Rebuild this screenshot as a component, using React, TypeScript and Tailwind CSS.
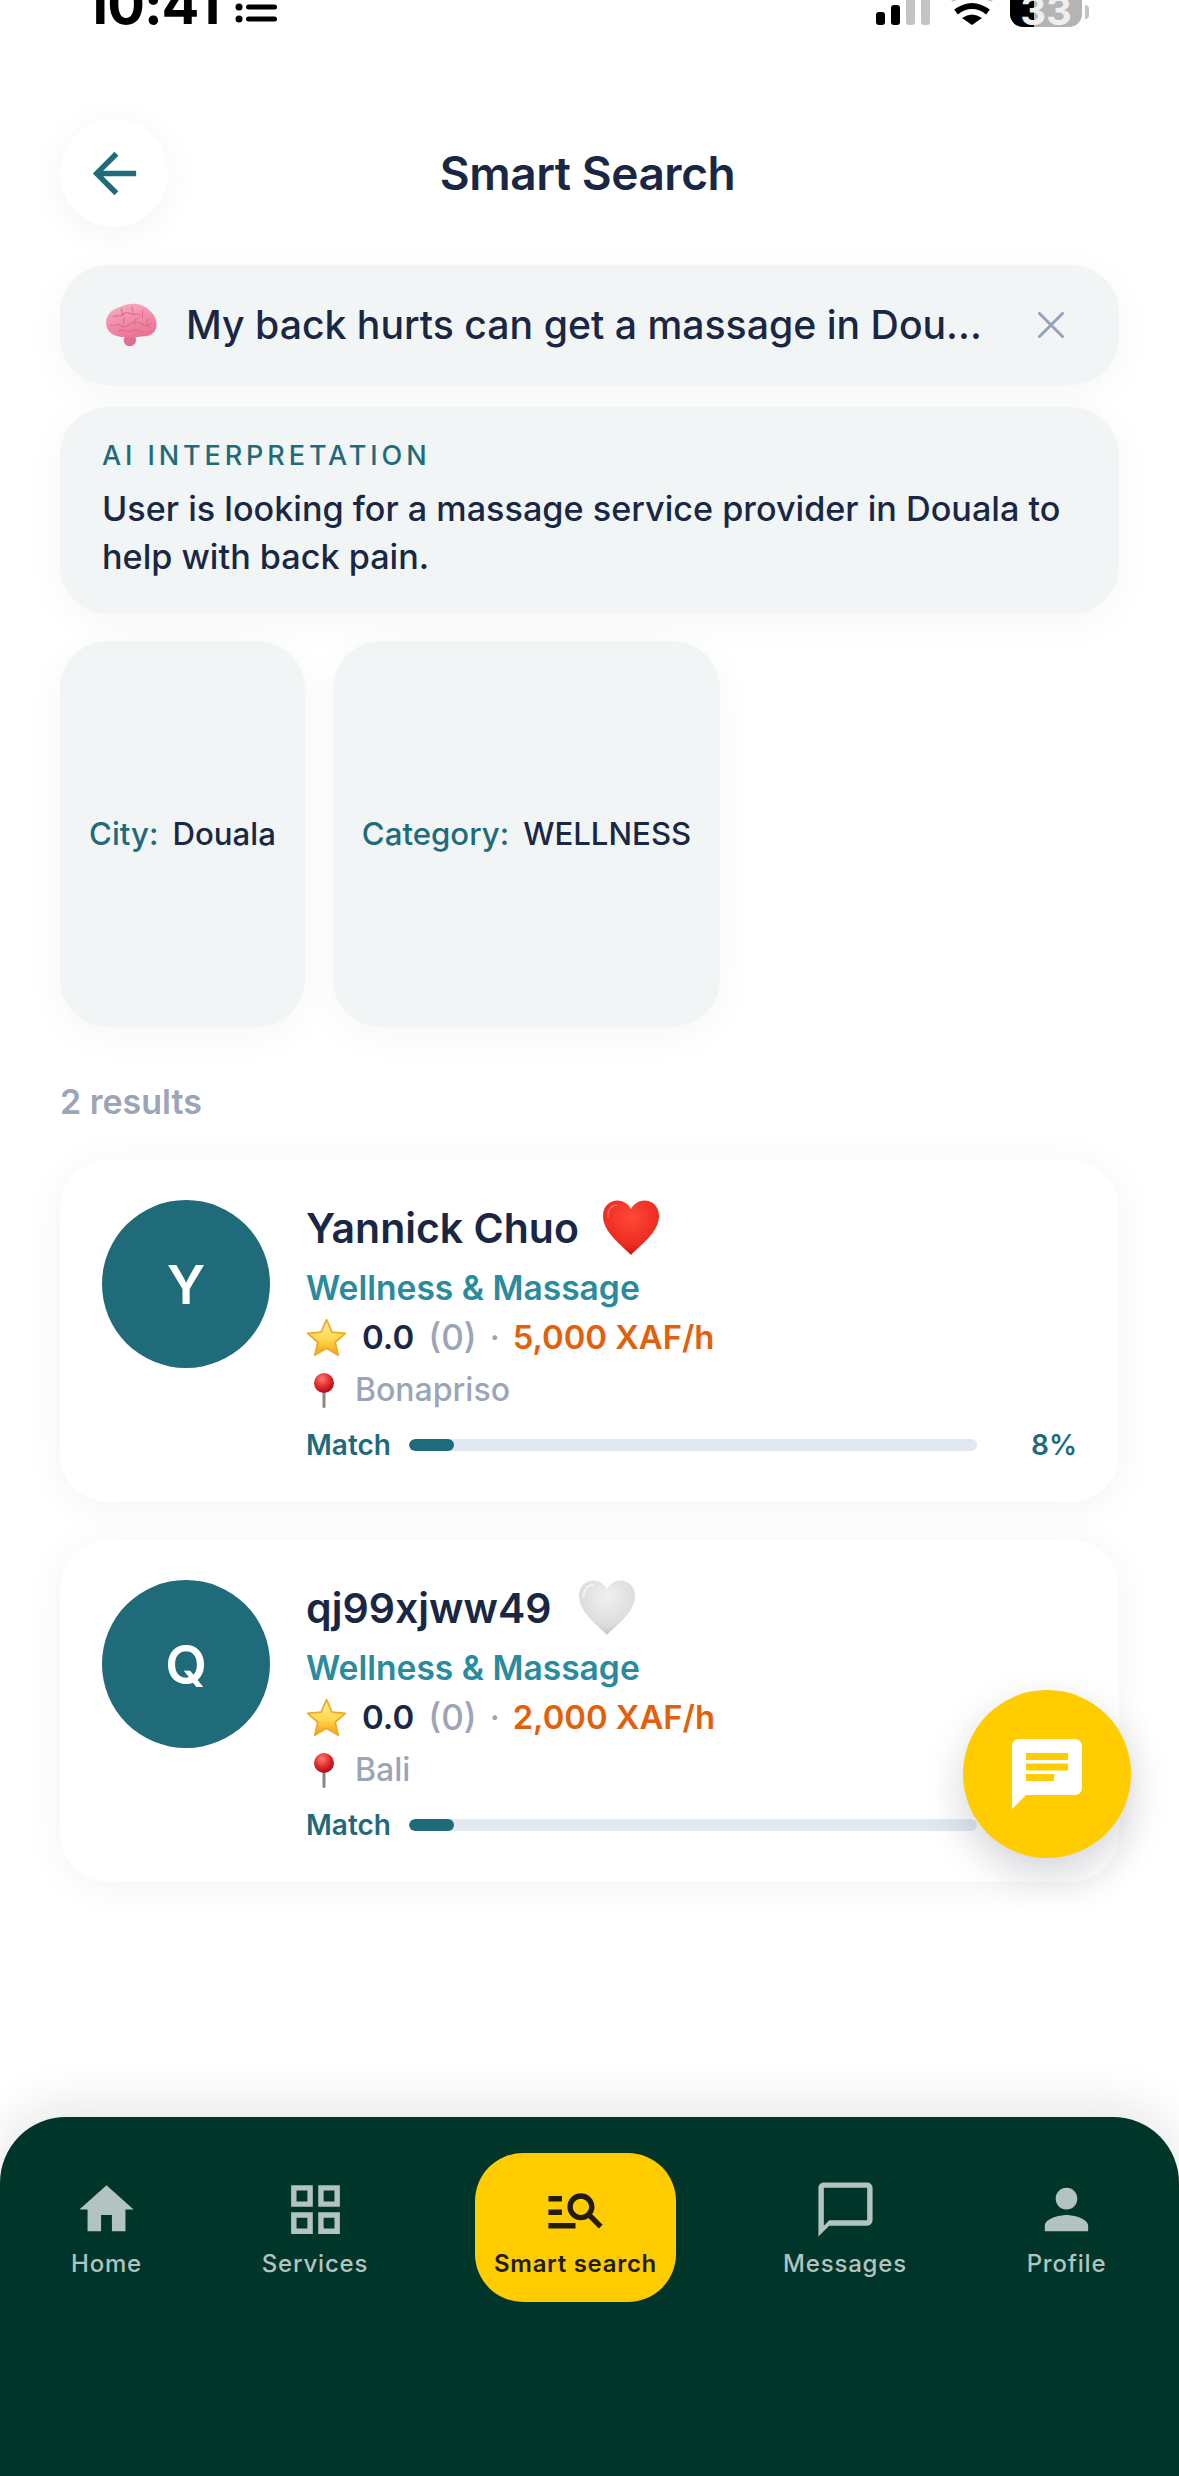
import React from "react";

const Mi = ({ d, size, className }: { d: string; size: number; className?: string }) => (
  <svg viewBox="0 0 24 24" width={size} height={size} className={className} fill="currentColor">
    <path d={d} />
  </svg>
);

const ICONS = {
  back: "M20 11H7.83l5.59-5.59L12 4l-8 8 8 8 1.41-1.41L7.83 13H20v-2z",
  home: "M10 20v-6h4v6h5v-8h3L12 3 2 12h3v8z",
  grid: "M3 3v8h8V3H3zm6 6H5V5h4v4zm-6 4v8h8v-8H3zm6 6H5v-4h4v4zm-6 4zM13 3v8h8V3h-8zm6 6h-4V5h4v4zm-6 4v8h8v-8h-8zm6 6h-4v-4h4v4z",
  search:
    "M7 9H2V7h5v2zm0 3H2v2h5v-2zm13.59 7-3.83-3.83c-.8.52-1.74.83-2.76.83-2.76 0-5-2.24-5-5s2.24-5 5-5 5 2.24 5 5c0 1.02-.31 1.96-.83 2.75L22 17.59 20.59 19zM17 11c0-1.65-1.35-3-3-3s-3 1.35-3 3 1.35 3 3 3 3-1.35 3-3zM2 19h10v-2H2v2z",
  msg: "M20 2H4c-1.1 0-2 .9-2 2v18l4-4h14c1.1 0 2-.9 2-2V4c0-1.1-.9-2-2-2zm0 14H6l-2 2V4h16v12z",
  person:
    "M12 12c2.21 0 4-1.79 4-4s-1.79-4-4-4-4 1.79-4 4 1.79 4 4 4zm0 2c-2.67 0-8 1.34-8 4v2h16v-2c0-2.66-5.33-4-8-4z",
  chat: "M20 2H4c-1.1 0-2 .9-2 2v18l4-4h14c1.1 0 2-.9 2-2V4c0-1.1-.9-2-2-2zM6 9h12v2H6V9zm8 5H6v-2h8v2zm4-6H6V6h12v2z",
};

const Brain = () => (
  <svg viewBox="0 0 53 44" width={53} height={44} className="shrink-0">
    <defs>
      <linearGradient id="br" x1="0" y1="0" x2="0.4" y2="1">
        <stop offset="0" stopColor="#f8b0c6" />
        <stop offset="1" stopColor="#ec7596" />
      </linearGradient>
    </defs>
    <path d="M30 33c2 4 1 9-4 10-5 1-8-3-7-8l5-4z" fill="#df6f8e" />
    <path
      d="M1 20C1 12 7 6 15 4 23-1 38-1 45 8c7 5 9 17 3 22-4 4-10 3-15 4-6 1-10 1-15 0C10 34 1 29 1 20z"
      fill="url(#br)"
    />
    <g fill="none" stroke="#dd6d8d" strokeWidth="1.100" strokeLinecap="round">
      <path d="M8 14c4-3 6 1 9-2s6-3 9-1 6-2 9 1" />
      <path d="M16 6c2 3 0 5 3 6M27 4c-1 3 2 4 1 7M38 7c-2 3 1 5-1 8" />
      <path d="M5 22c4 2 7-2 10 0s5 3 9 0 9-4 13-1 6 2 9-1" />
      <path d="M14 28c4-3 8 2 12 0s8-1 11 1M44 16c-3 2-3 5-1 8M33 15c-3 1-4 3-3 6M20 15c-2 1-2 3-1 5" />
    </g>
  </svg>
);

const Star = () => (
  <svg viewBox="1 1 38 36" width={41} height={39} className="shrink-0">
    <defs>
      <linearGradient id="st" x1="0" y1="0" x2="0" y2="1">
        <stop offset="0" stopColor="#fff0a6" />
        <stop offset="0.55" stopColor="#ffd84e" />
        <stop offset="1" stopColor="#f29f12" />
      </linearGradient>
    </defs>
    <path
      d="M20 2.500l5 11.500 12.500 1.200-9.500 8.200 2.900 12.100L20 29l-10.900 6.500L12 23.400 2.500 15.200 15 14z"
      fill="url(#st)"
      stroke="#eeaa22"
      strokeWidth="1.600"
      strokeLinejoin="round"
    />
  </svg>
);

const Heart = ({ active }: { active: boolean }) => {
  const id = active ? "hr" : "hg";
  return (
    <svg viewBox="0 0 58 56" width={58} height={56} className="shrink-0">
      <defs>
        <radialGradient id={id} cx="0.5" cy="0.3" r="0.75">
          <stop offset="0" stopColor={active ? "#ff4a38" : "#f0f0f0"} />
          <stop offset="0.7" stopColor={active ? "#ec2a20" : "#dcdcdc"} />
          <stop offset="1" stopColor={active ? "#bd0e0a" : "#bdbdbd"} />
        </radialGradient>
      </defs>
      <path
        d="M29 55C22 47 1 33 1 16 1 6 8 .5 15.500.5 21 .5 26 3.500 29 9 32 3.500 37 .5 42.500.5 50 .5 57 6 57 16 57 33 36 47 29 55z"
        fill={`url(#${id})`}
      />
      <path
        d="M6 17C5 10 10 5 15 5"
        fill="none"
        stroke={active ? "#ff8a78" : "#ffffff"}
        strokeWidth="1.500"
        strokeLinecap="round"
        opacity="0.7"
      />
    </svg>
  );
};

const Pin = ({ id }: { id: string }) => (
  <svg viewBox="0 0 22 36" width={22} height={36} className="shrink-0">
    <defs>
      <radialGradient id={id} cx="0.4" cy="0.3" r="0.7">
        <stop offset="0" stopColor="#ff7a6e" />
        <stop offset="0.6" stopColor="#e0262a" />
        <stop offset="1" stopColor="#a80f16" />
      </radialGradient>
    </defs>
    <rect x="9.500" y="18" width="3" height="18" rx="1.500" fill="#8c8584" />
    <circle cx="11" cy="11" r="10" fill={`url(#${id})`} />
  </svg>
);

type P = { initial: string; name: string; fav: boolean; price: string; area: string; id: string; heartGap: string };

const Card = ({ p }: { p: P }) => (
  <div className="flex gap-[36px] rounded-[48px] bg-white px-[42px] pb-[42px] pt-[40px] shadow-[0_4px_40px_rgba(15,23,42,0.05)]">
    <div className="flex h-[168px] w-[168px] shrink-0 items-center justify-center rounded-full bg-[#1f6b7a] text-[54px] font-semibold text-white">
      {p.initial}
    </div>
    <div className="flex min-w-0 flex-1 flex-col">
      <div className={`flex h-[56px] items-center ${p.heartGap}`}>
        <span className="text-[41px] font-semibold leading-[56px] text-[#1a2744]">{p.name}</span>
        <Heart active={p.fav} />
      </div>
      <div className="mt-[9px] text-[33.6px] font-semibold leading-[46px] text-[#2a8a9e]">Wellness &amp; Massage</div>
      <div className="mt-[3px] flex h-[46px] items-center text-[33px] font-semibold leading-[46px]">
        <Star />
        <span className="ml-[15px] text-[#1a2744]">0.0</span>
        <span className="ml-[14px] text-[35px] font-medium text-[#9aa5b8]">(0)</span>
        <span className="ml-[13px] font-medium text-[#9aa5b8]">·</span>
        <span className="ml-[13px] text-[32.8px] text-[#e35f0a]">{p.price}</span>
      </div>
      <div className="mt-[7px] flex h-[46px] items-center pl-[7px]">
        <Pin id={p.id} />
        <span className="ml-[20px] text-[32px] font-medium text-[#9aa5b8]">{p.area}</span>
      </div>
      <div className="mt-[17px] flex h-[30px] items-center">
        <span className="w-[103px] shrink-0 text-[28px] font-semibold text-[#1f6b7a]">Match</span>
        <div className="h-[12px] flex-1 overflow-hidden rounded-full bg-[#e2e8f0]">
          <div className="h-full w-[8%] rounded-full bg-[#1f6b7a]" />
        </div>
        <span className="w-[100px] shrink-0 text-right text-[28px] font-semibold text-[#1f6b7a]">8%</span>
      </div>
    </div>
  </div>
);

const NavItem = ({ icon, label, w, ml }: { icon: string; label: string; w: string; ml: string }) => (
  <div className={`flex flex-col items-center pt-[24px] text-[#b2c3c0] ${w} ${ml}`}>
    <Mi d={icon} size={65} />
    <span className="mt-[7px] whitespace-nowrap text-[24px] font-medium leading-[30px] tracking-[0.8px]">{label}</span>
  </div>
);

export default function App() {
  return (
    <div className="relative flex min-h-[2476px] w-full flex-col overflow-hidden bg-white font-['Inter',sans-serif]">
      {/* status bar */}
      <div className="flex h-[27px] shrink-0 items-end justify-between overflow-hidden pl-[84px] pr-[90px]">
        <div className="flex items-end">
          <span className="mb-[-5px] text-[56px] font-bold leading-none tracking-[-1px] text-black">10:41</span>
          <svg width="42" height="20" viewBox="0 0 42 20" className="mb-[4px] ml-[15px]">
            <circle cx="4" cy="4" r="3.500" fill="#000" />
            <circle cx="4" cy="16" r="3.500" fill="#000" />
            <rect x="11" y="1.500" width="31" height="5" rx="2.500" fill="#000" />
            <rect x="11" y="13.500" width="31" height="5" rx="2.500" fill="#000" />
          </svg>
        </div>
        <div className="flex items-end">
          <svg width="54" height="25" viewBox="0 0 54 25" className="mb-[2px]">
            <rect x="0" y="12" width="9" height="13" rx="3" fill="#000" />
            <rect x="15" y="5" width="9" height="20" rx="3" fill="#000" />
            <rect x="30" y="-4" width="9" height="29" rx="3" fill="#c4c4c4" />
            <rect x="45" y="-4" width="9" height="29" rx="3" fill="#c4c4c4" />
          </svg>
          <svg width="50" height="27" viewBox="0 0 50 27" className="ml-[17px]">
            <path d="M4-1Q25-9 46-1" fill="none" stroke="#c4c4c4" strokeWidth="6" />
            <path d="M9 12Q25 0 41 12" fill="none" stroke="#000" strokeWidth="6" />
            <path d="M25 25L15 18Q25 11 35 18Z" fill="#000" />
          </svg>
          <div className="relative ml-[13px] flex h-[27px] w-[72px] items-end justify-center overflow-hidden rounded-b-[13px] bg-[linear-gradient(90deg,#000_33%,#b4b4b4_33%)]">
            <span className="mb-[1px] text-[40px] font-bold leading-[30px] text-[#eeeeee]">33</span>
          </div>
          <div className="mb-[8px] ml-[3px] h-[14px] w-[4px] rounded-r-full bg-[#c4c4c4]" />
        </div>
      </div>

      <div className="flex flex-col px-[60px]">
        {/* header */}
        <div className="mt-[92px] flex items-center justify-between">
          <button className="flex h-[108px] w-[108px] items-center justify-center rounded-full bg-white text-[#1f6b7a] shadow-[0_6px_36px_rgba(15,23,42,0.05)]">
            <Mi d={ICONS.back} size={65} />
          </button>
          <h1 className="mr-[4px] text-[46px] font-semibold tracking-[-0.45px] text-[#1a2744]">Smart Search</h1>
          <div className="h-[108px] w-[108px]" />
        </div>

        {/* query */}
        <div className="mt-[38px] flex h-[120px] items-center rounded-[48px] bg-[#f1f5f6] pl-[45px] pr-[55px] shadow-[0_8px_40px_rgba(15,23,42,0.04)]">
          <Brain />
          <span className="ml-[28px] flex-1 truncate text-[39.2px] font-medium text-[#1a2744]">
            My back hurts can get a massage in Dou...
          </span>
          <svg width="26" height="26" viewBox="0 0 26 26" className="shrink-0">
            <path d="M1.500 1.500l23 23M24.500 1.500l-23 23" stroke="#94a3b8" strokeWidth="3" strokeLinecap="round" />
          </svg>
        </div>

        {/* AI */}
        <div className="mt-[22px] rounded-[48px] bg-[#f1f5f6] px-[42px] pb-[33px] pt-[32px] shadow-[0_8px_40px_rgba(15,23,42,0.04)]">
          <div className="text-[27px] font-medium leading-[34px] tracking-[3.900px] text-[#1f6b7a]">AI INTERPRETATION</div>
          <p className="mt-[12px] text-[34.2px] font-medium leading-[48px] text-[#1a2744]">
            User is looking for a massage service provider in Douala to help with back pain.
          </p>
        </div>

        {/* chips */}
        <div className="mt-[27px] flex gap-[28px]">
          <div className="flex h-[386px] w-[245px] items-center justify-center gap-[14px] rounded-[48px] bg-[#f1f5f6] text-[31.2px] font-medium shadow-[0_8px_40px_rgba(15,23,42,0.04)]">
            <span className="text-[#1f6b7a]">City:</span>
            <span className="text-[#1a2744]">Douala</span>
          </div>
          <div className="flex h-[386px] w-[387px] items-center justify-center gap-[14px] rounded-[48px] bg-[#f1f5f6] text-[31.2px] font-medium shadow-[0_8px_40px_rgba(15,23,42,0.04)]">
            <span className="text-[#1f6b7a]">Category:</span>
            <span className="text-[#1a2744]">WELLNESS</span>
          </div>
        </div>

        <div className="mt-[54px] text-[34px] font-semibold leading-[42px] text-[#9aa5b8]">2 results</div>

        <div className="mt-[37px] flex flex-col gap-[38px]">
          <Card p={{ initial: "Y", name: "Yannick Chuo", fav: true, price: "5,000 XAF/h", area: "Bonapriso", id: "p1", heartGap: "gap-[23px]" }} />
          <Card p={{ initial: "Q", name: "qj99xjww49", fav: false, price: "2,000 XAF/h", area: "Bali", id: "p2", heartGap: "gap-[27px]" }} />
        </div>
      </div>

      <div className="flex-1" />

      {/* nav */}
      <nav className="flex h-[359px] shrink-0 items-start rounded-t-[66px] bg-[#00352a] pl-[72px] pt-[36px] shadow-[0_-12px_50px_rgba(15,23,42,0.1)]">
        <NavItem icon={ICONS.home} label="Home" w="w-[69px]" ml="" />
        <NavItem icon={ICONS.grid} label="Services" w="w-[104px]" ml="ml-[122px]" />
        <div className="ml-[108px] flex h-[149px] w-[201px] flex-col items-center rounded-[48px] bg-[#ffcc00] pt-[24px] text-[#231c0c]">
          <Mi d={ICONS.search} size={65} />
          <span className="mt-[7px] whitespace-nowrap text-[24px] font-semibold leading-[30px] tracking-[0.7px]">Smart search</span>
        </div>
        <NavItem icon={ICONS.msg} label="Messages" w="w-[122px]" ml="ml-[108px]" />
        <NavItem icon={ICONS.person} label="Profile" w="w-[79px]" ml="ml-[121px]" />
      </nav>

      {/* FAB */}
      <button className="absolute left-[963px] top-[1690px] flex h-[168px] w-[168px] items-center justify-center rounded-full bg-[#ffcc00] text-white shadow-[0_16px_40px_rgba(15,23,42,0.18)]">
        <Mi d={ICONS.chat} size={84} />
      </button>
    </div>
  );
}
